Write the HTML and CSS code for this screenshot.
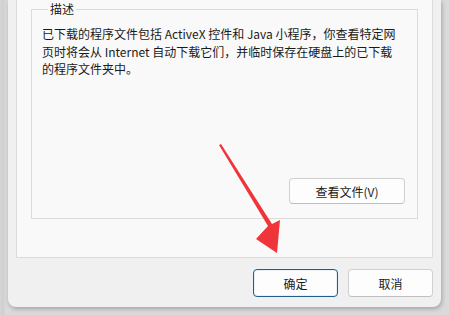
FILE: index.html
```html
<!DOCTYPE html>
<html lang="zh-CN">
<head>
    <meta charset="UTF-8">
    <title>已下载的程序文件</title>
    <link rel="stylesheet" href="styles.css">
</head>
<body>

    <div class="dialog">
        <!-- Page de l'onglet -->
        <div class="panel">
            <fieldset class="group">
                <legend>描述</legend>
                <p class="desc">已下载的程序文件包括 ActiveX 控件和 Java 小程序，你查看特定网<br>页时将会从 Internet 自动下载它们，并临时保存在硬盘上的已下载<br>的程序文件夹中。</p>
                <div class="group-actions">
                    <button class="btn btn-wide">查看文件(V)</button>
                </div>
            </fieldset>
        </div>

        <!-- Boutons du bas -->
        <div class="footer">
            <button class="btn btn-default">确定</button>
            <button class="btn">取消</button>
        </div>
    </div>

    <!-- Flèche rouge -->
    <svg class="arrow" width="449" height="315" viewBox="0 0 449 315">
        <path d="M219 145 L268 226 L256 239 L277 253 L280 220 L272 224 L221 144 Z" fill="#f0353a"/>
    </svg>

</body>
</html>
```

FILE: styles.css
```css
body {
    margin: 0;
    width: 449px;
    height: 315px;
    overflow: hidden;
    background: linear-gradient(to right, #d6d6d6 0, #cfcfcf 3px, #dadada 6px);
    font-family: "Segoe UI", "Noto Sans CJK SC", sans-serif;
    font-size: 12px;
    color: #1a1a1a;
    position: relative;
}

.dialog {
    margin-left: 8px;
    width: 433px;
    height: 307px;
    background-color: #f0f0f0;
    border-radius: 0 0 8px 8px;
    box-shadow: 1px 2px 4px rgba(0, 0, 0, 0.25);
    display: flex;
    flex-direction: column;
}

/* Page de l'onglet */
.panel {
    margin: 0 8px;
    height: 257px;
    background-color: #f9f9f9;
    border: 1px solid #dcdcdc;
    border-top: none;
    padding: 0 14px;
}

.group {
    margin: 2px 0 0;
    padding: 0 10px 14px;
    height: 201px;
    border: 1px solid #dcdcdc;
    display: flex;
    flex-direction: column;
    font-family: "Noto Sans CJK SC", sans-serif;
}

.group legend {
    margin-left: 6px;
    padding: 0 2px;
    font-size: 12px;
    line-height: 14px;
}

.desc {
    margin: 9px 0 0;
    line-height: 17.5px;
}

.group-actions {
    margin-top: auto;
    display: flex;
    justify-content: flex-end;
    padding-right: 2px;
}

/* Boutons */
.btn {
    height: 28px;
    width: 85px;
    background-color: #fdfdfd;
    border: 1px solid #d0d0d0;
    border-bottom-color: #bfbfbf;
    border-radius: 4px;
    font-family: "Noto Sans CJK SC", sans-serif;
    font-size: 12px;
    color: #1a1a1a;
    padding: 0;
}

.btn-wide {
    width: 116px;
    height: 26px;
}

.btn-default {
    border: 1px solid #1f5f8b;
    box-shadow: inset 0 0 0 1px #e8f0f6;
}

.footer {
    display: flex;
    justify-content: flex-end;
    gap: 10px;
    padding: 11px 8px 0 0;
}

.arrow {
    position: absolute;
    left: 0;
    top: 0;
}
```
